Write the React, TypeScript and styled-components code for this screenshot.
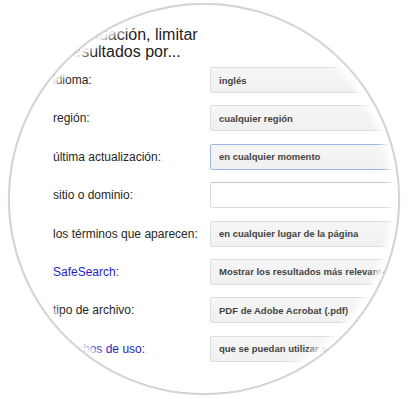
import { createGlobalStyle, styled } from 'styled-components';

type FieldRow = {
  label: string;
  value?: string;
  link?: boolean;
  kind?: 'select' | 'focused' | 'input';
};

const rows: FieldRow[] = [
  { label: 'idioma:', value: 'inglés' },
  { label: 'región:', value: 'cualquier región' },
  { label: 'última actualización:', value: 'en cualquier momento', kind: 'focused' },
  { label: 'sitio o dominio:', kind: 'input' },
  { label: 'los términos que aparecen:', value: 'en cualquier lugar de la página' },
  { label: 'SafeSearch:', value: 'Mostrar los resultados más relevantes', link: true },
  { label: 'tipo de archivo:', value: 'PDF de Adobe Acrobat (.pdf)' },
  { label: 'derechos de uso:', value: 'que se puedan utilizar o compartir libremente', link: true },
];

const GlobalStyle = createGlobalStyle`
  html, body {
    margin: 0;
    padding: 0;
    background: #ffffff;
  }
  body {
    font-family: 'Liberation Sans', Arial, sans-serif;
  }
`;

export default function App() {
  return (
    <>
      <GlobalStyle />
      <Page>
        <Circle>
          <Content>
            <Heading>
              A continuación, limitar
              <br />
              los resultados por...
            </Heading>
            <Form>
              {rows.map(row => (
                <Row key={row.label}>
                  <Label $link={row.link}>{row.label}</Label>
                  <Box $kind={row.kind ?? 'select'}>{row.value}</Box>
                </Row>
              ))}
            </Form>
          </Content>
        </Circle>
      </Page>
    </>
  );
}

const Page = styled.div`
  width: 410px;
  height: 399px;
  padding: 3px 0 0 8px;
  box-sizing: border-box;
  background: #ffffff;
`;

const Circle = styled.div`
  position: relative;
  width: 392px;
  height: 392px;
  box-sizing: border-box;
  border-radius: 50%;
  border: 2px solid #d4d4d4;
  box-shadow: 0 0 1px rgba(0, 0, 0, 0.15);
  overflow: hidden;
  background: #ffffff;

  &::after {
    content: '';
    position: absolute;
    inset: 0;
    border-radius: 50%;
    box-shadow: inset 0 0 7px 7px #ffffff;
    pointer-events: none;
  }
`;

const Content = styled.div`
  padding: 21px 0 0 32px;
`;

const Heading = styled.div`
  font-size: 16px;
  line-height: 17px;
  color: #222222;
`;

const Form = styled.div`
  display: grid;
  row-gap: 12.4px;
  margin-top: 7px;
  padding-left: 11px;
`;

const Row = styled.div`
  display: grid;
  grid-template-columns: 157px 320px;
  align-items: center;
`;

const Label = styled.div<{ $link?: boolean }>`
  font-size: 12px;
  color: ${({ $link }) => ($link ? '#1f1fc4' : '#262626')};
  white-space: nowrap;
`;

const Box = styled.div<{ $kind: 'select' | 'focused' | 'input' }>`
  height: 26px;
  box-sizing: border-box;
  display: flex;
  align-items: center;
  padding-left: 8px;
  border-radius: 2px;
  font-size: 9.5px;
  font-weight: bold;
  color: #444444;
  white-space: nowrap;
  overflow: hidden;
  background: ${({ $kind }) =>
    $kind === 'input' ? '#ffffff' : 'linear-gradient(#f6f6f6, #f0f0f0)'};
  border: 1px solid
    ${({ $kind }) => ($kind === 'focused' ? '#9db7e6' : '#dcdcdc')};
  border-top-color: ${({ $kind }) =>
    $kind === 'input' ? '#c8c8c8' : $kind === 'focused' ? '#9db7e6' : '#dcdcdc'};
`;
